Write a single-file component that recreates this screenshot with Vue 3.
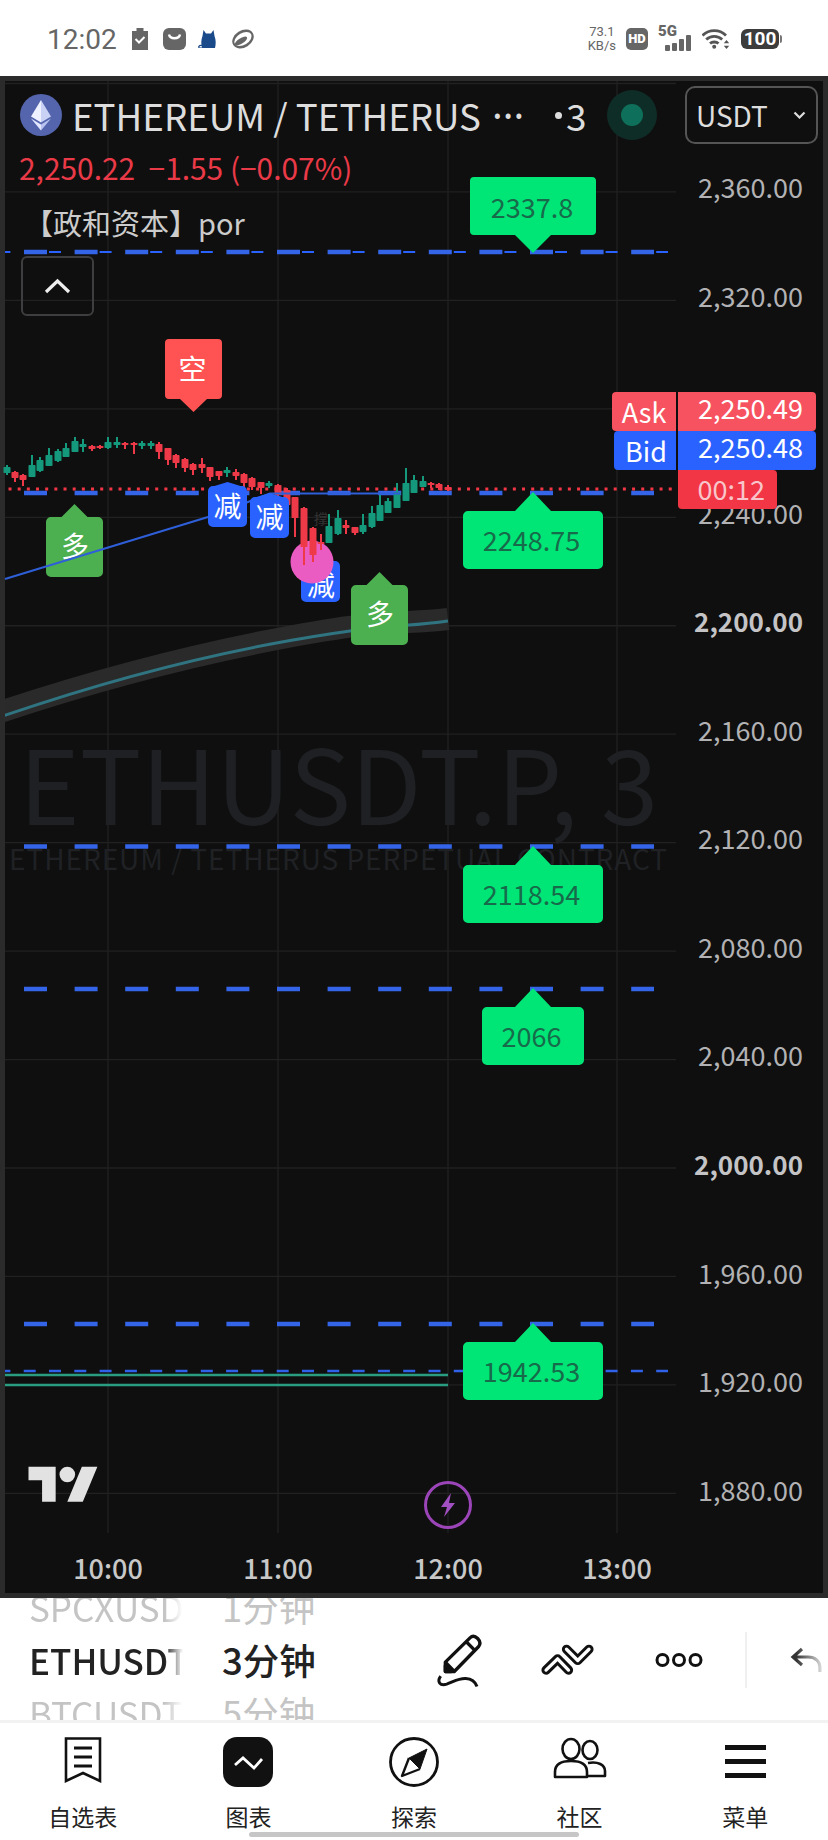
<template>
  <div class="page">
    <header class="status">
      <div class="status__left">
        <span class="status__time">12:02</span>
        <svg class="i-clip" width="16" height="22" viewBox="0 0 16 22"><path d="M0 3h4.500V0h7v3H16v19H0z" fill="#666"/><path d="M3.500 11l3.500 3.500 5.500-5.500" fill="none" stroke="#fff" stroke-width="2"/></svg>
        <svg class="i-bag" width="23" height="22" viewBox="0 0 23 22"><rect width="23" height="22" rx="6" fill="#666"/><path d="M6 6.500c1 5 10 5 11 0" fill="none" stroke="#fff" stroke-width="2.400"/></svg>
        <svg class="i-cat" width="20" height="18" viewBox="0 0 20 18"><path d="M5.500 0l2.500 3.500h5L15.500 0l1 6c1.500 4 1.500 8 .5 12H4c-1-4-1-8 .5-12z" fill="#1a4a8a"/><path d="M4 15.500c-3-1-4.500 2.500-2 2.500h3" fill="none" stroke="#1a4a8a" stroke-width="1.200"/></svg>
        <svg class="i-orbit" width="24" height="20" viewBox="0 0 24 20"><ellipse cx="12" cy="10" rx="11.500" ry="8.500" transform="rotate(-32 12 10)" fill="#666"/><ellipse cx="12" cy="10" rx="9.500" ry="5.800" transform="rotate(-32 12 10)" fill="#fff"/><ellipse cx="10" cy="12" rx="7" ry="2.800" transform="rotate(-32 10 12)" fill="#666"/></svg>
      </div>
      <div class="status__right">
        <div class="status__speed"><span>73.1</span><span>KB/s</span></div>
        <span class="status__hd">HD</span>
        <div class="status__net">
          <span>5G</span>
          <svg width="27" height="16" viewBox="0 0 27 16"><rect x="0" y="10" width="5" height="6" rx="1" fill="#666"/><rect x="7" y="8" width="5" height="8" rx="1" fill="#666"/><rect x="14" y="4" width="5" height="12" rx="1" fill="#666"/><rect x="21" y="0" width="5" height="16" rx="1" fill="#666"/></svg>
        </div>
        <svg width="28" height="20" viewBox="0 0 28 20"><path d="M0.500 6.500c6.500-6.500 17-6.500 23.500 0M4.200 10.500c4.500-4.300 11.500-4.300 16 0M8 14.500c2.200-2 6.300-2 8.500 0" fill="none" stroke="#555" stroke-width="2.800"/><circle cx="12.200" cy="17.800" r="2" fill="#555"/><path d="M24.500 11l2.700 3.200h-5.400zM24.500 20l2.700-3.200h-5.400z" fill="#555"/></svg>
        <div class="status__battery">100</div>
      </div>
    </header>

    <section class="chart">
      <svg class="chart__svg" width="828" height="1522" viewBox="0 76 828 1522">
        <defs>
          <clipPath id="pane"><rect x="5" y="81" width="671" height="1512" /></clipPath>
        </defs>

        <line v-for="y in gridY" :key="'h' + y" x1="5" x2="676" :y1="y" :y2="y" class="grid" />
        <line v-for="x in gridX" :key="'v' + x" :x1="x" :x2="x" y1="81" y2="1533" class="grid" />

        <text x="19" y="825" class="mark-big">ETHUSDT.P, 3</text>
        <text x="9" y="870" class="mark-small">ETHEREUM / TETHERUS PERPETUAL CONTRACT</text>

        <g clip-path="url(#pane)">
          <path d="M0 712C90 682 190 655 293 636S400 625 448 619" class="ma-band" />
          <path d="M0 717C90 686 190 658 293 640S400 628 448 621" class="ma-line" />
          <line x1="-1.600" x2="668" y1="252" y2="252" class="thin-a" />
          <line x1="-1.600" x2="668" y1="1371" y2="1371" class="thin-b" />
          <line x1="5" x2="448" y1="1375" y2="1375" class="flat-green" />
          <line x1="5" x2="448" y1="1385" y2="1385" class="flat-green" />
        </g>
        <line v-for="y in dashY" :key="'d' + y" x1="24" x2="654" :y1="y" :y2="y" class="dash" />
        <line x1="8.500" x2="676" y1="489" y2="489" class="dots" />

        <g>
          <path :d="markerPath(301, 561, 39, 41, 321, 557)" class="m-blue" />
          <text x="321" y="596" class="m-text">减</text>
        </g>
        <circle cx="312" cy="562" r="21.500" fill="#ea5cc2" />

        <g v-for="c in candles" :key="c.x" :class="c.up ? 'c-up' : 'c-down'">
          <line :x1="c.x" :x2="c.x" :y1="c.h" :y2="c.l" class="wick" />
          <rect :x="c.x - 3.500" :y="c.t" width="7" :height="c.b - c.t" rx="0.800" />
        </g>
        <text x="314" y="524" class="faint">撑</text>

        <g v-for="m in longMarks" :key="m.x">
          <path :d="markerPath(m.x, m.y, 57, 60, m.x + 28.500, m.y - 13)" class="m-green" />
          <text :x="m.x + 29" :y="m.y + 40" class="m-text">多</text>
        </g>

        <path d="M5 579L208 517L248 502L270 493.500H400" class="blue-line" />

        <g v-for="m in cutMarks" :key="m.x">
          <path :d="markerPath(m.x, m.y, 39, 41, m.x + 19.500, m.y - 4)" class="m-blue" />
          <text :x="m.x + 19.500" :y="m.y + 31" class="m-text">减</text>
        </g>

        <path d="M169 339H218a4 4 0 0 1 4 4V395a4 4 0 0 1-4 4H207L193.500 412L180 399H169a4 4 0 0 1-4-4V343a4 4 0 0 1 4-4Z" class="m-red" />
        <text x="192.500" y="380" class="m-text">空</text>

        <path d="M474 177H592a4 4 0 0 1 4 4V231a4 4 0 0 1-4 4H551L533 253L515 235H474a4 4 0 0 1-4-4V181a4 4 0 0 1 4-4Z" class="tag" />
        <text x="532" y="218" class="tag-text">2337.8</text>
        <g v-for="t in tags" :key="t.label">
          <path :d="markerPath(t.x, t.y, t.w, 58, 533, t.y - 19, 18)" class="tag" />
          <text x="531.500" :y="t.y + 40" class="tag-text">{{ t.label }}</text>
        </g>

        <text v-for="p in prices" :key="p.label" x="803" :y="p.y" :class="['axis', { 'axis--bold': p.bold }]">{{ p.label }}</text>

        <path d="M616 392H676V431H616a4 4 0 0 1-4-4V396a4 4 0 0 1 4-4Z" fill="#f7525f" />
        <path d="M678 392H812a4 4 0 0 1 4 4V427a4 4 0 0 1-4 4H678Z" fill="#f7525f" />
        <path d="M618 431H676V470H618a4 4 0 0 1-4-4V435a4 4 0 0 1 4-4Z" fill="#2962ff" />
        <path d="M678 431H812a4 4 0 0 1 4 4V466a4 4 0 0 1-4 4H678Z" fill="#2962ff" />
        <path d="M678 470H773a4 4 0 0 1 4 4V505a4 4 0 0 1-4 4H682a4 4 0 0 1-4-4Z" fill="#f23645" />
        <text x="644" y="423" class="quote quote--mid">Ask</text>
        <text x="646" y="462" class="quote quote--mid">Bid</text>
        <text x="803" y="419" class="quote">2,250.49</text>
        <text x="803" y="458" class="quote">2,250.48</text>
        <text x="765" y="500" class="quote quote--timer">00:12</text>

        <path d="M0 4h14v18H7V11H0zM20 22l7.500-18h8L28 22z" transform="translate(28.500 1459) scale(1.940)" fill="#e2e2e2" />
        <circle cx="67.300" cy="1474.500" r="7.800" fill="#e2e2e2" />

        <circle cx="448" cy="1505" r="22.500" class="bolt-ring" />
        <path d="M451 1493L441 1507H447L444 1517L455 1503H449Z" class="bolt" />

        <text v-for="(t, i) in times" :key="t" :x="gridX[i]" y="1579" class="time">{{ t }}</text>
      </svg>

      <div class="legend">
        <div class="legend__title">
          <svg class="legend__logo" width="42" height="42" viewBox="0 0 42 42">
            <circle cx="21" cy="21" r="21" fill="#5465ad" />
            <path d="M21 6L11 22.500L21 28.500Z" fill="#eef1ff" />
            <path d="M21 6L31 22.500L21 28.500Z" fill="#c9d2f5" />
            <path d="M11 24.500L21 36.500V30.500Z" fill="#e3e8ff" />
            <path d="M31 24.500L21 36.500V30.500Z" fill="#b8c3ef" />
          </svg>
          <span class="legend__name">ETHEREUM / TETHERUS</span>
          <span class="legend__more">···</span>
          <span class="legend__res"><i></i>3</span>
          <span class="legend__live"><i></i></span>
        </div>
        <div class="legend__price">2,250.22&nbsp; −1.55 (−0.07%)</div>
        <div class="legend__study">【政和资本】por</div>
        <button class="legend__toggle">
          <svg width="27" height="16" viewBox="0 0 27 16"><path d="M2 14L13.500 3L25 14" fill="none" stroke="#eee" stroke-width="3.200" /></svg>
        </button>
      </div>

      <div class="currency">
        <span>USDT</span>
        <svg width="13" height="8" viewBox="0 0 13 8"><path d="M1.500 1.500L6.500 6.500L11.500 1.500" fill="none" stroke="#ddd" stroke-width="2.200" /></svg>
      </div>
    </section>

    <section class="tools">
      <div class="wheel wheel--symbol">
        <span class="wheel__row wheel__row--off">SPCXUSDT</span>
        <span class="wheel__row wheel__row--on">ETHUSDT</span>
        <span class="wheel__row wheel__row--off">BTCUSDT</span>
      </div>
      <div class="wheel wheel--time">
        <span class="wheel__row wheel__row--off">1分钟</span>
        <span class="wheel__row wheel__row--on">3分钟</span>
        <span class="wheel__row wheel__row--off">5分钟</span>
      </div>
      <div class="tools__icons">
        <svg class="t-pencil" width="50" height="57" viewBox="42 65 150 170" fill="none" stroke="#111" stroke-width="10" stroke-linejoin="round">
          <path d="M76 183V155L150 82C157 75 165 76 173 84C181 92 182 100 176 108L103 183Z" />
          <path d="M76 155L103 183M138 93L166 121" />
          <path d="M76 183V165L94 183Z" fill="#111" />
          <path d="M62 197C50 214 60 227 80 221C100 214 115 203 137 204C155 205 166 214 171 228" stroke-width="9" />
        </svg>
        <svg class="t-lines" width="57" height="35" viewBox="358 98 172 106" fill="none" stroke-linecap="round" stroke-linejoin="round">
          <path d="M379 180L414 146L447 180M441 117L475 151L509 117" stroke="#111" stroke-width="28" />
          <path d="M379 180L414 146L447 180M441 117L475 151L509 117" stroke="#fff" stroke-width="10" />
        </svg>
        <svg class="t-more" width="48" height="16" viewBox="0 0 48 16" fill="none" stroke="#111" stroke-width="3"><circle cx="7.500" cy="8" r="5.500" /><circle cx="24" cy="8" r="5.500" /><circle cx="40.500" cy="8" r="5.500" /></svg>
        <span class="tools__divider"></span>
        <svg class="t-undo" width="32" height="26" viewBox="0 0 32 26" fill="none" stroke="url(#undoFade)" stroke-width="3.200">
          <defs>
            <linearGradient id="undoFade" gradientUnits="userSpaceOnUse" x1="0" x2="32" y1="0" y2="0"><stop offset="0.200" stop-color="#333" /><stop offset="1" stop-color="#ddd" /></linearGradient>
          </defs>
          <path d="M30 25V21C30 14 25 10 18 10H3M12 2L3 10L12 18" />
        </svg>
      </div>
    </section>

    <nav class="tabs">
      <div class="tabs__item">
        <svg width="38" height="46" viewBox="0 0 38 46" fill="none" stroke="#111"><path d="M2 1.500H36V44L19 36L2 44Z" stroke-width="2.600" /><path d="M10 11H28M10 20H28M10 29H28" stroke-width="3" /></svg>
        <span>自选表</span>
      </div>
      <div class="tabs__item">
        <svg width="50" height="50" viewBox="0 0 50 50"><rect width="50" height="50" rx="14" fill="#111" /><path d="M12 28L20 21L31 31L39 22" fill="none" stroke="#fff" stroke-width="2.800" /></svg>
        <span>图表</span>
      </div>
      <div class="tabs__item">
        <svg width="50" height="50" viewBox="0 0 50 50" fill="none" stroke="#111"><circle cx="25" cy="25" r="23.500" stroke-width="2.800" /><path d="M38 12L31 32L20 21Z" fill="#111" stroke-width="1" /><path d="M20 21L13 39L31 32" stroke-width="2.400" stroke-linejoin="round" /></svg>
        <span>探索</span>
      </div>
      <div class="tabs__item">
        <svg width="54" height="42" viewBox="0 0 54 42" fill="none" stroke="#111" stroke-width="2.600"><ellipse cx="18" cy="12" rx="8.500" ry="10" /><ellipse cx="37" cy="13" rx="7.500" ry="9" /><path d="M2 40V35C2 27 9 24 18 24C27 24 34 27 34 35V40Z" fill="#fff" stroke-linejoin="round" /><path d="M35 26C45 24 52 28 52 34V39H35" stroke-linejoin="round" /></svg>
        <span>社区</span>
      </div>
      <div class="tabs__item">
        <div class="burger"><i></i><i></i><i></i></div>
        <span>菜单</span>
      </div>
      <i class="tabs__home"></i>
    </nav>
  </div>
</template>

<script setup>
const gridX = [108, 278, 448, 617]
const gridY = Array.from({ length: 14 }, (_, i) => 83.5 + i * 108.45)
const dashY = [252, 493, 846.5, 989, 1324]
const times = ['10:00', '11:00', '12:00', '13:00']

// axis labels, 40 points per grid step
const prices = [
  '2,360.00', '2,320.00', '2,280.00', '2,240.00', '2,200.00', '2,160.00', '2,120.00',
  '2,080.00', '2,040.00', '2,000.00', '1,960.00', '1,920.00', '1,880.00'
].map((label, i) => ({
  label,
  y: 198 + i * 108.55,
  bold: label === '2,200.00' || label === '2,000.00'
}))
prices.splice(2, 1)

const tags = [
  { label: '2248.75', x: 463, y: 511, w: 140 },
  { label: '2118.54', x: 463, y: 865, w: 140 },
  { label: '2066', x: 482, y: 1007, w: 102 },
  { label: '1942.53', x: 463, y: 1342, w: 140 }
]
const longMarks = [{ x: 46, y: 517 }, { x: 351, y: 585 }]
const cutMarks = [{ x: 208, y: 486 }, { x: 250, y: 497 }]

// x, wick top, body top, body bottom, wick bottom, in page pixels
const rows = [
  [7, 465, 467, 473, 475, 1], [15, 471, 472, 478, 482, 0], [23, 474, 475, 480, 486, 0],
  [32, 455, 465, 477, 477, 1], [40, 457, 460, 471, 472, 1], [49, 448, 455, 466, 466, 1],
  [58, 449, 451, 461, 462, 1], [66, 443, 448, 457, 457, 1], [75, 437, 441, 452, 452, 1],
  [83, 439, 444, 447, 452, 1], [92, 445, 446, 449, 451, 0], [100, 445, 446, 448, 449, 0],
  [108, 437, 442, 448, 449, 1], [117, 437, 442, 445, 448, 1], [125, 442, 443, 445, 449, 0],
  [134, 442, 443, 445, 454, 0], [142, 441, 443, 446, 449, 1], [151, 441, 443, 446, 449, 1],
  [159, 442, 444, 452, 459, 0], [168, 448, 448, 460, 465, 0], [176, 454, 455, 463, 468, 0],
  [185, 458, 459, 468, 472, 0], [193, 463, 464, 470, 475, 0], [202, 458, 464, 468, 473, 0],
  [210, 467, 467, 477, 481, 0], [219, 471, 471, 476, 480, 0], [227, 467, 470, 473, 477, 1],
  [236, 469, 472, 476, 480, 0], [244, 473, 474, 483, 487, 0], [252, 477, 478, 487, 490, 0],
  [261, 482, 482, 488, 494, 0], [269, 481, 483, 486, 488, 1], [278, 484, 485, 495, 512, 0],
  [287, 488, 490, 505, 517, 0], [295, 497, 497, 518, 537, 0], [304, 507, 508, 547, 565, 0],
  [313, 527, 528, 555, 562, 0], [321, 534, 542, 544, 550, 0], [329, 514, 526, 543, 543, 1],
  [338, 510, 518, 534, 535, 1], [346, 520, 525, 528, 534, 0], [355, 527, 527, 533, 535, 0],
  [363, 514, 525, 532, 534, 1], [372, 506, 513, 527, 528, 1], [380, 495, 505, 521, 521, 1],
  [388, 498, 501, 513, 513, 1], [397, 483, 492, 508, 508, 1], [406, 468, 483, 501, 501, 1],
  [414, 475, 480, 493, 493, 1], [423, 476, 481, 487, 487, 1], [431, 482, 483, 485, 488, 0],
  [439, 483, 484, 488, 490, 0], [448, 485, 487, 490, 491, 0]
]
const candles = rows.map(([x, h, t, b, l, up]) => ({ x, h, t, b, l, up: !!up }))

// rounded box with a small arrow on top or a custom tip half-width
function markerPath(x, y, w, h, tipX, tipY, half = 13) {
  const r = 5
  return `M${x + r} ${y}H${tipX - half}L${tipX} ${tipY}L${tipX + half} ${y}H${x + w - r}a${r} ${r} 0 0 1 ${r} ${r}V${y + h - r}a${r} ${r} 0 0 1-${r} ${r}H${x + r}a${r} ${r} 0 0 1-${r}-${r}V${y + r}a${r} ${r} 0 0 1 ${r}-${r}Z`
}
</script>

<style>
html, body {
  margin: 0;
  background: #fff;
}
</style>

<style scoped>
.page {
  width: 828px;
  height: 1840px;
  overflow: hidden;
  background: #fff;
  font-family: "Noto Sans CJK SC", "Noto Sans", sans-serif;
}

.status {
  height: 76px;
  padding: 2px 47px 0;
  box-sizing: border-box;
  display: flex;
  justify-content: space-between;
  align-items: center;
  color: #666;
  font-family: Roboto, sans-serif;
}
.status__left {
  display: flex;
  align-items: center;
}
.i-clip { margin-left: 15px; }
.i-bag { margin-left: 15px; }
.i-cat { margin-left: 12px; }
.i-orbit { margin-left: 13px; }
.status__time {
  font-size: 28px;
  color: #666;
}
.status__right {
  display: flex;
  align-items: center;
  gap: 10px;
}
.status__speed {
  display: flex;
  flex-direction: column;
  align-items: center;
  font-size: 13px;
  line-height: 14px;
}
.status__hd {
  width: 22px;
  height: 22px;
  border-radius: 5px;
  background: #666;
  color: #fff;
  font-size: 13px;
  font-weight: 900;
  line-height: 22px;
  text-align: center;
}
.status__net {
  width: 34px;
  height: 24px;
  position: relative;
  font-size: 15px;
  font-weight: 900;
  line-height: 15px;
}
.status__net svg {
  position: absolute;
  right: 0;
  bottom: 0;
}
.status__net span {
  position: absolute;
  left: 0;
  top: -3px;
}
.status__battery {
  position: relative;
  width: 38px;
  height: 20px;
  margin: 0 2px 0 1px;
  border-radius: 6px;
  background: #3c3c3c;
  color: #fff;
  font-size: 19px;
  font-weight: 700;
  line-height: 20px;
  text-align: center;
}
.status__battery::after {
  content: "";
  position: absolute;
  right: -3px;
  top: 6px;
  width: 2px;
  height: 8px;
  border-radius: 0 2px 2px 0;
  background: #777;
}

.chart {
  position: relative;
  height: 1522px;
  background: #0f0f0f;
  box-shadow: inset 0 0 0 5px #2b2b2b;
}
.chart__svg {
  position: absolute;
  left: 0;
  top: 0;
}
.grid {
  stroke: #212122;
  stroke-width: 1.300;
}
.mark-big {
  font-size: 103px;
  fill: #1e2023;
}
.mark-small {
  font-size: 28px;
  letter-spacing: 0.950px;
  fill: #1f2124;
}
.ma-band {
  fill: none;
  stroke: #2a2a2b;
  stroke-width: 22;
}
.ma-line {
  fill: none;
  stroke: #2f7480;
  stroke-width: 3;
}
.thin-a {
  stroke: #2962ff;
  stroke-width: 2.200;
  stroke-dasharray: 12 38.600;
}
.thin-b {
  stroke: #2f62e8;
  stroke-width: 2.600;
  stroke-dasharray: 12 13.300;
}
.flat-green {
  stroke: #2a9d80;
  stroke-width: 2.400;
}
.dash {
  stroke: #3465e8;
  stroke-width: 4.500;
  stroke-dasharray: 23 27.600;
}
.dots {
  stroke: #f23645;
  stroke-width: 3;
  stroke-dasharray: 3 6.170;
}
.blue-line {
  fill: none;
  stroke: #2f5fd8;
  stroke-width: 2;
}
.wick {
  stroke-width: 2;
}
.c-up .wick { stroke: #14997c; }
.c-up rect { fill: #14997c; }
.c-down .wick { stroke: #ee3a48; }
.c-down rect { fill: #ee3a48; }
.faint {
  font-size: 14px;
  fill: #333;
}
.m-green { fill: #4caf50; }
.m-blue { fill: #2962ff; }
.m-red { fill: #ff5252; }
.m-text {
  font-size: 28px;
  fill: #fff;
  text-anchor: middle;
}
.tag { fill: #00e676; }
.tag-text {
  font-size: 27px;
  fill: #176b4a;
  text-anchor: middle;
}
.axis {
  font-size: 27px;
  fill: #b2b2b4;
  text-anchor: end;
}
.axis--bold {
  font-size: 26px;
  font-weight: 700;
  fill: #c4c4c6;
}
.quote {
  font-size: 27px;
  fill: #fff;
  text-anchor: end;
}
.quote--mid { text-anchor: middle; }
.quote--timer { fill: #f8c6ca; }
.bolt-ring {
  fill: none;
  stroke: #9b45b8;
  stroke-width: 3;
}
.bolt { fill: #a24fc2; }
.time {
  font-size: 27px;
  font-weight: 500;
  fill: #c8c8c8;
  text-anchor: middle;
}

.legend {
  position: absolute;
  left: 20px;
  top: 18px;
  color: #ddd;
}
.legend__title {
  display: flex;
  align-items: center;
  height: 42px;
}
.legend__logo { flex: none; }
.legend__name {
  margin-left: 10px;
  font-size: 36.700px;
  line-height: 42px;
  white-space: nowrap;
}
.legend__more {
  position: absolute;
  left: 472px;
  top: 0;
  font-family: "Noto Sans", sans-serif;
  font-size: 40px;
  line-height: 42px;
}
.legend__res {
  position: absolute;
  left: 535px;
  top: 0;
  font-size: 37px;
  line-height: 42px;
  display: flex;
  align-items: center;
  gap: 4px;
}
.legend__res i {
  width: 7px;
  height: 7px;
  border-radius: 50%;
  background: #ddd;
}
.legend__live {
  position: absolute;
  left: 587px;
  top: -4px;
  width: 50px;
  height: 50px;
  border-radius: 50%;
  background: #0f2d27;
  display: flex;
  align-items: center;
  justify-content: center;
}
.legend__live i {
  width: 22px;
  height: 22px;
  border-radius: 50%;
  background: #0e705a;
}
.legend__price {
  margin: 8px 0 0 -1px;
  font-size: 29.900px;
  line-height: 46px;
  color: #ea3a48;
  white-space: nowrap;
}
.legend__study {
  margin: 11px 0 0 4px;
  font-size: 29px;
  line-height: 42px;
  color: #ccc;
  white-space: nowrap;
}
.legend__toggle {
  display: flex;
  align-items: center;
  justify-content: center;
  width: 73px;
  height: 60px;
  margin: 13px 0 0 1px;
  padding: 0;
  box-sizing: border-box;
  background: transparent;
  border: 2px solid #3e3e40;
  border-radius: 6px;
}
.currency {
  position: absolute;
  left: 685px;
  top: 10px;
  width: 133px;
  height: 58px;
  box-sizing: border-box;
  padding: 0 10px 0 9px;
  border: 2px solid #555;
  border-radius: 10px;
  display: flex;
  align-items: center;
  justify-content: space-between;
  color: #ddd;
  font-size: 28px;
}

.tools {
  height: 122px;
  display: flex;
  align-items: center;
  overflow: hidden;
}
.wheel {
  height: 122px;
  display: flex;
  flex-direction: column;
  justify-content: center;
  overflow: hidden;
  white-space: nowrap;
  flex: none;
}
.wheel--symbol {
  width: 154px;
  margin-left: 29px;
  -webkit-mask-image: linear-gradient(to right, #000 88%, transparent);
  mask-image: linear-gradient(to right, #000 88%, transparent);
}
.wheel--time {
  width: 100px;
  margin-left: 39px;
  font-size: 36px;
}
.wheel__row {
  flex: none;
  height: 53px;
  line-height: 53px;
  font-size: 35px;
}
.wheel--time .wheel__row { font-size: 36.500px; }
.wheel__row--on {
  font-weight: 500;
  color: #222;
}
.wheel__row--off {
  color: #c4c4c4;
}
.tools__icons {
  position: relative;
  flex: 1;
  height: 122px;
}
.tools__icons svg {
  position: absolute;
}
.tools__icons .t-pencil { left: 112px; top: 34px; }
.tools__icons .t-lines { left: 217px; top: 45px; }
.tools__icons .t-more { left: 333px; top: 54px; }
.tools__icons .t-undo { left: 468px; top: 49px; }
.tools__divider {
  position: absolute;
  left: 423px;
  top: 34px;
  width: 2px;
  height: 56px;
  background: #f0f0f0;
}

.tabs {
  position: relative;
  height: 120px;
  box-sizing: border-box;
  border-top: 3px solid #f2f2f2;
  display: grid;
  grid-template-columns: repeat(5, 1fr);
}
.tabs__item {
  position: relative;
  display: flex;
  justify-content: center;
  padding-top: 14px;
  box-sizing: border-box;
}
.tabs__item span {
  position: absolute;
  left: 0;
  right: 0;
  top: 76px;
  font-size: 23px;
  line-height: 34px;
  text-align: center;
  color: #222;
}
.burger {
  display: flex;
  flex-direction: column;
  gap: 9.500px;
  width: 41px;
  margin-top: 8px;
}
.burger i {
  display: block;
  height: 4.500px;
  background: #111;
}
.tabs__home {
  position: absolute;
  left: 249px;
  top: 109px;
  width: 330px;
  height: 5px;
  border-radius: 3px;
  background: #c6c6c6;
}
</style>
